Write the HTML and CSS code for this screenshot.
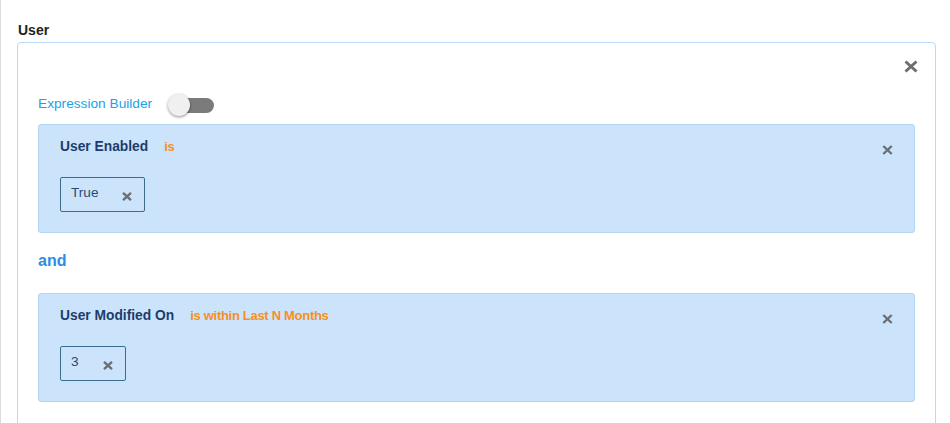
FILE: index.html
```html
<!DOCTYPE html>
<html>
<head>
<meta charset="utf-8">
<link rel="stylesheet" href="styles.css">
</head>
<body>
<div class="page">
  <div class="field-label">User</div>
  <div class="panel">
    <div class="panel-head">
      <svg class="x-big" width="14" height="13" viewBox="0 0 14 13"><path d="M1.5 1.5 L12.5 11.5 M12.5 1.5 L1.5 11.5" stroke="#6e6e6e" stroke-width="3" fill="none"/></svg>
    </div>
    <div class="expr-row">
      <span class="expr-label">Expression Builder</span>
      <span class="toggle"><span class="toggle-track"></span><span class="toggle-knob"></span></span>
    </div>
    <div class="cond">
      <div class="cond-head">
        <span class="cond-field">User Enabled</span>
        <span class="cond-op">is</span>
        <svg class="x-small" width="11" height="10" viewBox="0 0 11 10"><path d="M1.3 1 L9.7 9 M9.7 1 L1.3 9" stroke="#6b6f75" stroke-width="2.4" fill="none"/></svg>
      </div>
      <div class="chips">
        <span class="chip"><span class="chip-text">True</span><svg class="chip-x" width="10" height="9" viewBox="0 0 10 9"><path d="M1 0.8 L9 8.2 M9 0.8 L1 8.2" stroke="#6b6f75" stroke-width="2.3" fill="none"/></svg></span>
      </div>
    </div>
    <div class="joiner">and</div>
    <div class="cond">
      <div class="cond-head">
        <span class="cond-field">User Modified On</span>
        <span class="cond-op">is within Last N Months</span>
        <svg class="x-small" width="11" height="10" viewBox="0 0 11 10"><path d="M1.3 1 L9.7 9 M9.7 1 L1.3 9" stroke="#6b6f75" stroke-width="2.4" fill="none"/></svg>
      </div>
      <div class="chips">
        <span class="chip"><span class="chip-text">3</span><svg class="chip-x" width="10" height="9" viewBox="0 0 10 9"><path d="M1 0.8 L9 8.2 M9 0.8 L1 8.2" stroke="#6b6f75" stroke-width="2.3" fill="none"/></svg></span>
      </div>
    </div>
  </div>
</div>
</body>
</html>
```

FILE: styles.css
```css
html, body {
  margin: 0;
  padding: 0;
  height: 100%;
  overflow: hidden;
  background: #ffffff;
  font-family: "Liberation Sans", Arial, sans-serif;
}
.page {
  border-left: 1px solid #dcdcdc;
  min-height: 100%;
  box-sizing: border-box;
  padding: 22px 14px 0 16px;
}
.field-label {
  font-size: 14px;
  font-weight: bold;
  line-height: 17px;
  color: #222;
  margin-bottom: 3px;
  padding-left: 1px;
}
.panel {
  border: 1px solid #b9daf6;
  border-radius: 4px;
  padding: 0 20px 60px 20px;
}
.panel-head {
  display: flex;
  justify-content: flex-end;
  padding-top: 17px;
  margin-right: -3px;
}
.x-big { display: block; }
.expr-row {
  display: flex;
  align-items: center;
  height: 22px;
  margin-top: 21px;
}
.expr-label {
  font-size: 13.7px;
  line-height: 16px;
  color: #1ba1e6;
  margin-bottom: 2px;
}
.toggle {
  position: relative;
  width: 46px;
  height: 22px;
  margin-left: 16px;
}
.toggle-track {
  position: absolute;
  left: 1px;
  top: 4px;
  width: 45px;
  height: 15px;
  border-radius: 8px;
  background: #7b7b7b;
}
.toggle-knob {
  position: absolute;
  left: 0;
  top: 0;
  width: 22px;
  height: 22px;
  border-radius: 50%;
  background: #f0f0f0;
  box-shadow: 0 1px 3px rgba(0,0,0,0.45);
}
.cond {
  margin-top: 8px;
  background: #cce4fb;
  border: 1px solid #b3d5f4;
  border-radius: 3px;
  padding: 14px 21px 20px 21px;
}
.cond-head {
  display: flex;
  align-items: flex-start;
  line-height: 16px;
}
.cond-field {
  color: #1c3d6c;
  font-size: 13.8px;
  font-weight: bold;
}
.cond-op {
  color: #f7901e;
  font-size: 13px;
  font-weight: bold;
  letter-spacing: -0.3px;
  margin-left: 16px;
}
.x-small {
  margin-left: auto;
  margin-top: 6px;
  display: block;
}
.chips {
  display: flex;
  margin-top: 22px;
}
.chip {
  display: flex;
  align-items: flex-start;
  height: 35px;
  box-sizing: border-box;
  border: 1px solid #3d6d8e;
  border-radius: 2px;
  padding: 7px 12px 0 10px;
}
.chip-text {
  font-size: 13.6px;
  line-height: 16px;
  color: #2a4a72;
}
.chip-x {
  display: block;
  margin-left: 24px;
  margin-top: 7px;
}
.joiner {
  font-size: 16px;
  font-weight: bold;
  line-height: 18px;
  color: #2a8ee3;
  margin-top: 19px;
}
.joiner + .cond {
  margin-top: 23px;
}
```
